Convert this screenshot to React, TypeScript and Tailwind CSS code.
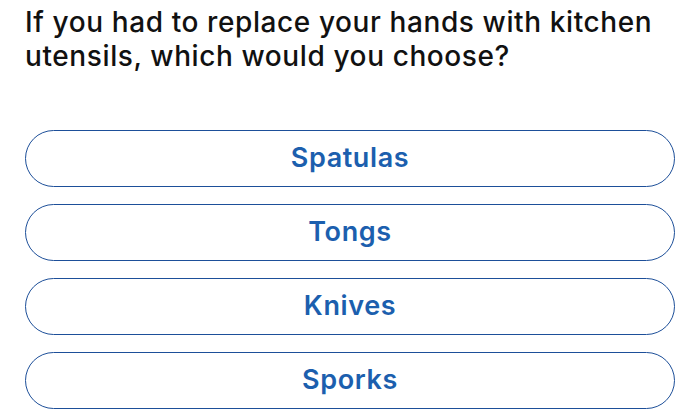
import React from 'react';

const options = ['Spatulas', 'Tongs', 'Knives', 'Sporks'];

export default function App() {
  return (
    <div className="min-h-screen bg-white pl-[25px] pr-[21px] pt-[5px] font-['Inter',sans-serif]">
      <h1 className="text-[28px] leading-[34px] text-[#111] font-medium tracking-[0.6px]">
        If you had to replace your hands with kitchen utensils, which would you choose?
      </h1>
      <div className="mt-[57px] flex flex-col gap-[17px]">
        {options.map((o) => (
          <button
            key={o}
            className="h-[57px] rounded-full border-[1.5px] border-[#1d4f99] text-[27px] font-semibold tracking-[0.6px] text-[#1c5fae] flex items-center justify-center"
          >
            {o}
          </button>
        ))}
      </div>
    </div>
  );
}
